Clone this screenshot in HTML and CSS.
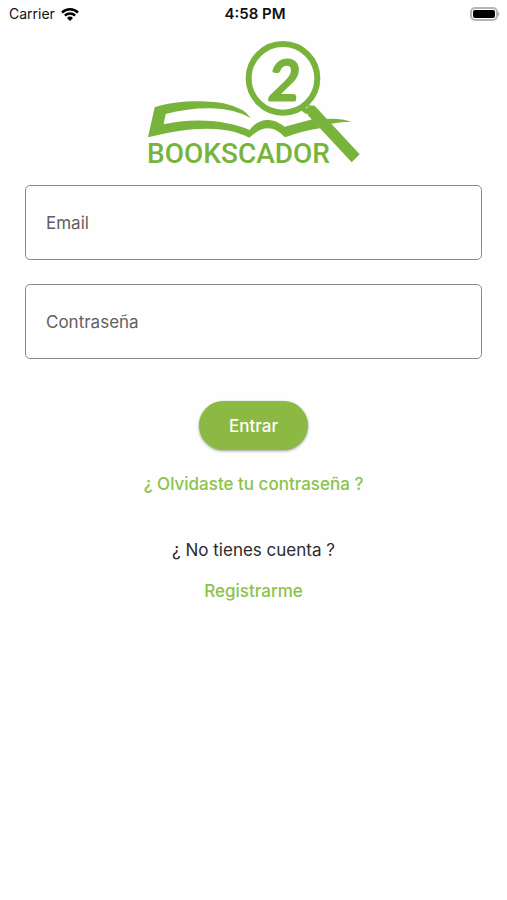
FILE: index.html
```html
<!DOCTYPE html>
<html lang="es">

<head>
    <meta charset="UTF-8">
    <meta name="viewport" content="width=device-width, initial-scale=1.0">
    <title>Bookscador</title>
    <link rel="stylesheet" href="styles.css">
</head>

<body>
    <!-- Status bar -->
    <header class="status-bar">
        <div class="carrier">
            <span>Carrier</span>
            <svg class="wifi" viewBox="0 0 18 13" aria-hidden="true">
                <path d="M1 4.6a11.5 11.5 0 0 1 16 0" />
                <path d="M3.9 7.7a7.3 7.3 0 0 1 10.2 0" />
                <path class="dot" d="M9 13 6 10a4.3 4.3 0 0 1 6 0z" />
            </svg>
        </div>
        <span class="time">4:58 PM</span>
        <svg class="battery" viewBox="0 0 31 14" aria-hidden="true">
            <rect class="shell" x="1" y="1" width="26" height="12" rx="4" />
            <rect x="3" y="3" width="22" height="8" rx="2" />
            <path class="tip" d="M28 4.500q3 2.500 0 5z" />
        </svg>
    </header>

    <main class="container">
        <!-- Logo -->
        <svg class="logo" viewBox="0 0 227 135" role="img" aria-label="Bookscador 2">
            <svg width="227" height="135" viewBox="0 0 681 405">
                <path d="M44 217C110 194 210 196 259 207Q314 220 332 249Q284 222 214 220Q144 219 77 237L71 268C150 248 260 253 329 285C350 256 389 240 434 275Q476 264 520 252L540 280Q487 288 435 307C400 272 370 270 328 308C250 268 145 277 24 307Z" />
                <path d="M552 252Q600 248 634 260Q606 260 570 267Z" />
                <path d="M497 225 505 211 524 212 659 358 635 382 505 242Z" />
                <path d="M487 220 503 232" class="neck" />
                <circle class="lens" cx="429" cy="130" r="103" />
            </svg>
            <text class="number" x="128" y="65">2</text>
            <text class="wordmark" x="7" y="128">BOOKSCADOR</text>
        </svg>

        <!-- Login form -->
        <form class="login-form">
            <div class="field">
                <input type="email" id="email" name="email" placeholder=" " required>
                <label for="email">Email</label>
            </div>
            <div class="field">
                <input type="password" id="password" name="password" placeholder=" " required>
                <label for="password">Contraseña</label>
            </div>
            <button type="submit">Entrar</button>
        </form>

        <a class="forgot" href="#">¿ Olvidaste tu contraseña ?</a>

        <p class="question">¿ No tienes cuenta ?</p>
        <a href="#">Registrarme</a>
    </main>
</body>

</html>
```
FILE: styles.css
```css
* {
    box-sizing: border-box;
}

body {
    margin: 0;
    background-color: #fefefe;
    color: #2b2b2b;
    font-family: Inter, "Liberation Sans", sans-serif;
    font-size: 17px;
    line-height: 24px;
}

/* Status bar */
.status-bar {
    display: grid;
    grid-template-columns: 1fr auto 1fr;
    align-items: center;
    height: 28px;
    padding: 0 6px 0 9px;
    color: #111;
    font-size: 14px;
}

.carrier {
    display: flex;
    align-items: center;
    gap: 6px;
}

.wifi {
    width: 18px;
    height: 13px;
    fill: none;
    stroke: #000;
    stroke-width: 2.5;
}

.wifi .dot {
    fill: #000;
    stroke: none;
}

.time {
    font-size: 15px;
    font-weight: 600;
}

.battery {
    justify-self: end;
    width: 31px;
    height: 14px;
}

.battery .shell {
    fill: #fff;
    stroke: #b5b5b5;
    stroke-width: 2;
}

.battery .tip {
    fill: #b5b5b5;
}

/* Page */
.container {
    display: flex;
    flex-direction: column;
    align-items: center;
    padding: 7px 25px 24px;
}

.logo {
    width: 227px;
    height: 135px;
    margin-bottom: 15px;
    fill: #78b43c;
}

.logo .lens {
    fill: none;
    stroke: #78b43c;
    stroke-width: 18;
}

.logo .neck {
    stroke: #78b43c;
    stroke-width: 14;
}

.logo .number {
    font-family: Lato, sans-serif;
    font-size: 56px;
    font-style: italic;
    font-weight: 400;
    stroke: #78b43c;
    stroke-linejoin: round;
    stroke-width: 3;
}

.logo .wordmark {
    font-family: Roboto, sans-serif;
    font-size: 28px;
    font-weight: 500;
}

.login-form {
    display: flex;
    flex-direction: column;
    align-items: center;
    gap: 24px;
    width: 100%;
}

.field {
    position: relative;
    width: 100%;
}

.field input {
    display: block;
    width: 100%;
    height: 75px;
    padding: 0 20px;
    border: 1px solid #8c8888;
    border-radius: 5px;
    background-color: transparent;
    font: inherit;
}

.field label {
    position: absolute;
    top: 26px;
    left: 21px;
    color: #635e5e;
    pointer-events: none;
}

/* the label moves onto the border once the field is in use */
.field input:focus + label,
.field input:not(:placeholder-shown) + label {
    top: -12px;
    padding: 0 4px;
    background-color: #fefefe;
    font-size: 14px;
}

button {
    height: 49px;
    margin-top: 18px;
    padding: 0 30px;
    border: none;
    border-radius: 25px;
    background-color: #8bb944;
    box-shadow: 0 1px 3px rgba(0, 0, 0, 0.4);
    color: white;
    cursor: pointer;
    font: inherit;
    font-weight: 500;
}

a {
    color: #8bc34a;
    font-weight: 500;
    text-decoration: none;
}

.forgot {
    margin-top: 22px;
}

.question {
    margin: 42px 0 17px;
}
```
